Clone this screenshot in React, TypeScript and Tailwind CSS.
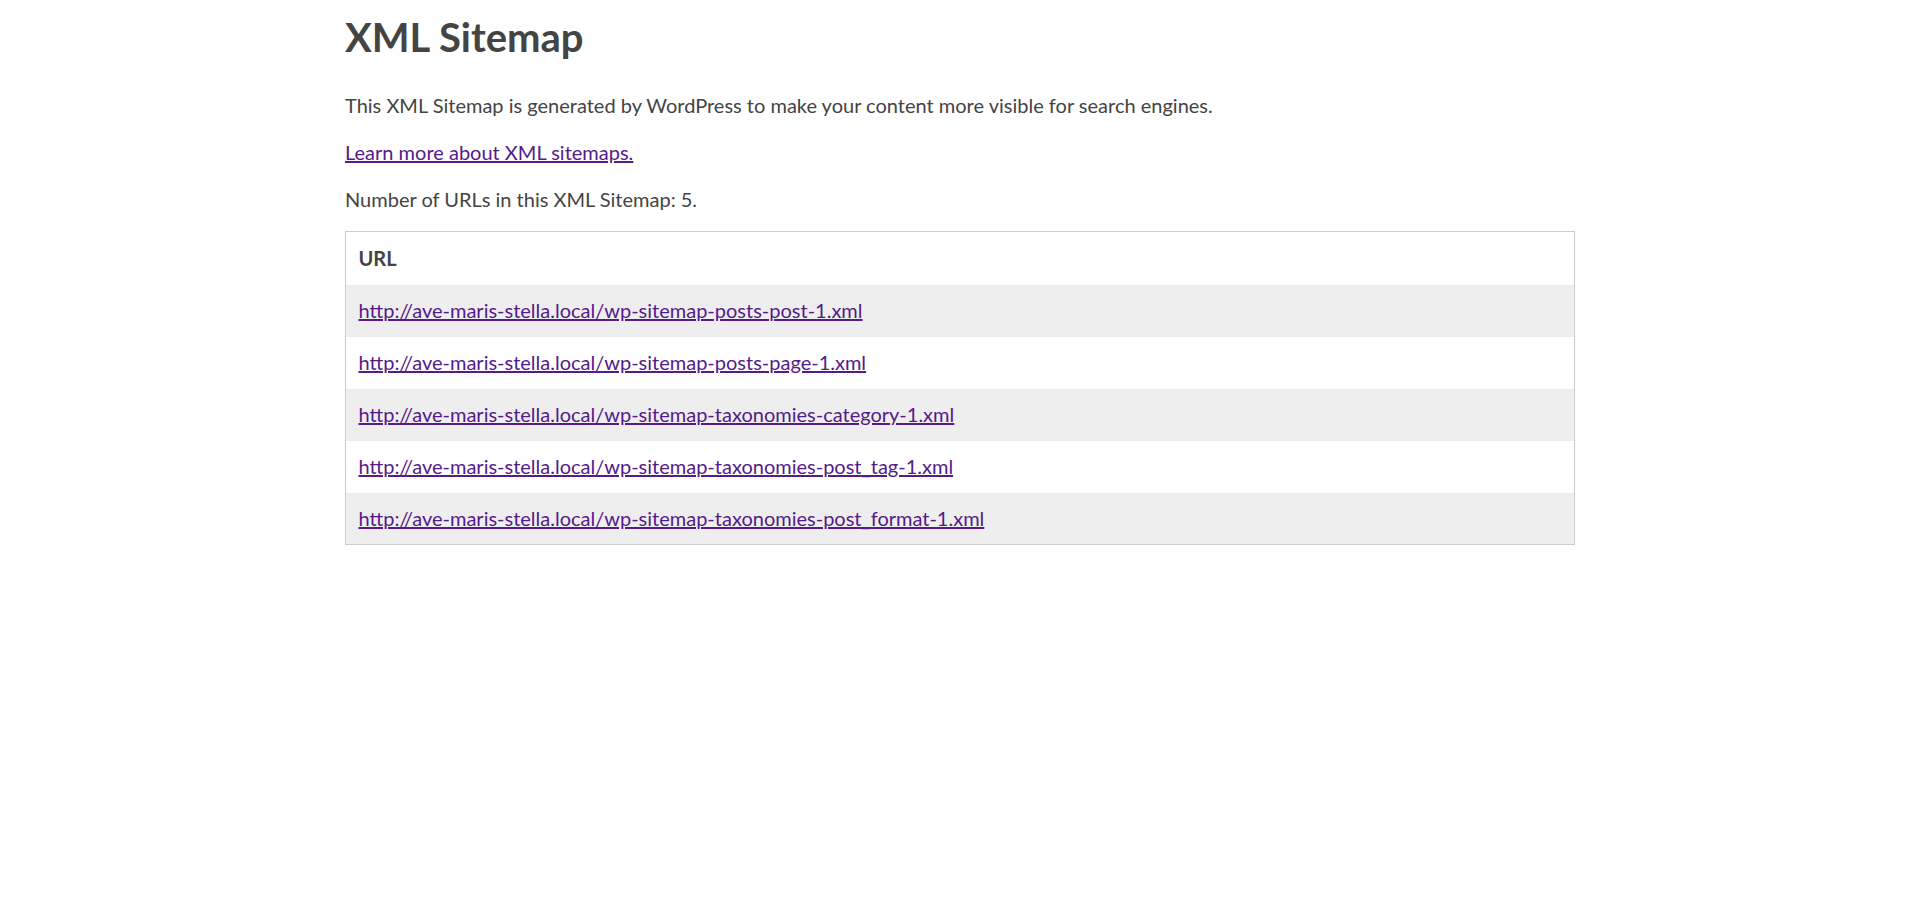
export default function App() {
  const urls = [
    "http://ave-maris-stella.local/wp-sitemap-posts-post-1.xml",
    "http://ave-maris-stella.local/wp-sitemap-posts-page-1.xml",
    "http://ave-maris-stella.local/wp-sitemap-taxonomies-category-1.xml",
    "http://ave-maris-stella.local/wp-sitemap-taxonomies-post_tag-1.xml",
    "http://ave-maris-stella.local/wp-sitemap-taxonomies-post_format-1.xml",
  ];
  return (
    <div className="bg-white min-h-[912px] text-[#444] text-[20px] leading-[27px]" style={{ fontFamily: "Lato, 'Noto Sans', sans-serif" }}>
      <div className="w-[1230px] mx-auto pt-[11px]">
        <h1 className="text-[40px] leading-[53px] font-bold">XML Sitemap</h1>
        <p className="mt-[28px]">This XML Sitemap is generated by WordPress to make your content more visible for search engines.</p>
        <p className="mt-[20px]"><a href="#" className="text-[#551a8b] underline">Learn more about XML sitemaps.</a></p>
        <p className="mt-[20px]">Number of URLs in this XML Sitemap: 5.</p>
        <table className="mt-[18px] w-full border border-[#ccc] border-collapse">
          <thead>
            <tr><th className="text-left font-bold px-[12.5px] h-[53px]">URL</th></tr>
          </thead>
          <tbody>
            {urls.map((u, i) => (
              <tr key={u} className={i % 2 === 0 ? "bg-[#eee]" : "bg-white"}>
                <td className="px-[12.5px] h-[52px]"><a href="#" className="text-[#551a8b] underline">{u}</a></td>
              </tr>
            ))}
          </tbody>
        </table>
      </div>
    </div>
  );
}
